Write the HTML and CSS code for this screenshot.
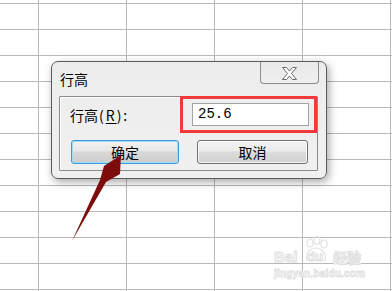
FILE: index.html
```html
<!DOCTYPE html>
<html lang="zh-CN">
<head>
    <meta charset="UTF-8">
    <title>行高</title>
    <link rel="stylesheet" href="styles.css">
</head>
<body>
    <div class="sheet">
        <!-- 行高对话框 -->
        <div class="dialog">
            <div class="titlebar">
                <div class="title">行高</div>
                <div class="close-btn">
                    <svg width="17" height="15" viewBox="0 0 17 15">
                        <path d="M1.5 1.5 H5.5 L8.5 5 L11.5 1.5 H15.5 L10.5 7.5 L15.5 13.5 H11.5 L8.5 10 L5.5 13.5 H1.5 L6.5 7.5 Z" fill="#fff" stroke="#6a6a6a" stroke-width="1" stroke-linejoin="round"/>
                    </svg>
                </div>
            </div>
            <div class="panel">
                <div class="label">行高<span class="key">(<u>R</u>):</span></div>
                <div class="mark">
                    <div class="input">25.6</div>
                </div>
                <div class="btn-cell"><button class="btn btn-ok">确定</button></div>
                <div class="btn-cell"><button class="btn btn-cancel">取消</button></div>
            </div>
        </div>

        <!-- 箭头标注 -->
        <svg class="arrow" width="392" height="291" viewBox="0 0 392 291">
            <polygon points="72,241 100,180 104,166 121,155 120,174 106,182" fill="#7d0c0c"/>
        </svg>

        <!-- 水印 -->
        <div class="watermark">
            <div class="wm-top">
                <span class="wm-bai">Bai</span>
                <span class="wm-du">
                    <svg width="26" height="26" viewBox="0 0 26 26">
                        <g fill="none" stroke="#e2e2e2" stroke-width="1.2">
                            <ellipse cx="7" cy="7" rx="3" ry="4"/>
                            <ellipse cx="14" cy="4.5" rx="3" ry="4"/>
                            <ellipse cx="21" cy="8" rx="3" ry="4"/>
                            <path d="M4 24 C2 17 8 12 13 12 C18 12 24 17 22 24 Z"/>
                        </g>
                    </svg>
                    <span class="wm-du-text">du</span>
                </span>
                <span class="wm-cn">经验</span>
            </div>
            <div class="wm-url">jingyan.baidu.com</div>
        </div>
    </div>
</body>
</html>
```

FILE: styles.css
```css
/* 基础样式 */
* {
    box-sizing: border-box;
    margin: 0;
    padding: 0;
}

body {
    font-family: 'Noto Sans CJK SC', 'Liberation Sans', sans-serif;
    background-color: #fff;
}

.sheet {
    position: relative;
    width: 392px;
    height: 291px;
    overflow: hidden;
    background-color: #fff;
    background-image:
        linear-gradient(to right, #b8b8b8 1px, transparent 1px),
        linear-gradient(to bottom, #b8b8b8 1px, transparent 1px);
    background-size: 88px 26px;
    background-position: 38px 3px;
}

/* 对话框 */
.dialog {
    position: absolute;
    left: 51px;
    top: 61px;
    width: 276px;
    height: 118px;
    border: 1px solid #5c5c5c;
    border-radius: 7px;
    background: linear-gradient(to bottom, #ededed, #f0f0f0);
    box-shadow: 2px 3px 8px rgba(0,0,0,0.35);
    display: flex;
    flex-direction: column;
}
.titlebar {
    height: 34px;
    display: flex;
    justify-content: space-between;
    align-items: flex-start;
}
.title {
    font-size: 14px;
    line-height: 20px;
    color: #000;
    margin: 7px 0 0 8px;
}
.close-btn {
    width: 59px;
    height: 22px;
    margin-right: 7px;
    border: 1px solid #8e8e8e;
    border-top: none;
    border-radius: 0 0 4px 4px;
    background: linear-gradient(to bottom, #e9e9e9, #efefef);
    display: flex;
    align-items: center;
    justify-content: center;
    padding-top: 1px;
}

.panel {
    margin: 0 8px 7px 7px;
    height: 75px;
    border: 1px solid #8a8a8a;
    box-shadow: inset 1px 1px 0 #fff;
    border-radius: 1px;
    display: grid;
    grid-template-columns: 120px 137px;
    grid-template-rows: 37px 24px;
    row-gap: 5px;
    align-items: center;
}
.label {
    font-size: 14px;
    color: #000;
    padding-left: 10px;
    margin-top: -1px;
}
.label .key {
    letter-spacing: 2px;
    margin-left: 1px;
}
.label u {
    text-underline-offset: 2px;
}
.mark {
    margin-top: -2px;
    height: 37px;
    border: 3px solid #f23a3a;
    padding: 4px 5px 4px 9px;
}
.input {
    height: 23px;
    border: 1px solid #a3a3a3;
    background-color: #fff;
    font-family: 'Liberation Mono', monospace;
    font-size: 14px;
    line-height: 21px;
    padding-left: 5px;
    color: #000;
}

.btn-cell {
    height: 24px;
}
.btn {
    height: 24px;
    font-family: 'Noto Sans CJK SC', sans-serif;
    font-size: 14px;
    line-height: 20px;
    color: #000;
    border-radius: 3px;
    background: linear-gradient(to bottom, #f3f3f3 0%, #ebebeb 45%, #dcdcdc 50%, #d0d0d0 100%);
    box-shadow: inset 0 0 0 1px rgba(255,255,255,0.8);
}
.btn-ok {
    width: 108px;
    margin-left: 11px;
    border: 1px solid #3c9ad6;
    background: linear-gradient(to bottom, #f2f2f2 0%, #e8e8e8 45%, #d8d8d8 50%, #cdcdcd 100%);
    box-shadow: inset 0 0 0 1px #9fdcf6;
}
.btn-cancel {
    width: 111px;
    margin-left: 17px;
    border: 1px solid #707070;
}

/* 箭头 */
.arrow {
    position: absolute;
    left: 0;
    top: 0;
}

/* 水印 */
.watermark {
    position: absolute;
    left: 274px;
    top: 236px;
    width: 92px;
    color: #fff;
    font-family: 'Liberation Sans', sans-serif;
}
.wm-top {
    display: flex;
    align-items: flex-end;
    height: 28px;
}
.wm-bai {
    font-size: 15px;
    font-weight: bold;
    line-height: 14px;
    -webkit-text-stroke: 1px #e0e0e0;
    width: 29px;
}
.wm-du {
    position: relative;
    width: 27px;
    height: 28px;
}
.wm-du-text {
    position: absolute;
    left: 4px;
    bottom: 0;
    font-size: 13px;
    font-weight: bold;
    line-height: 14px;
    -webkit-text-stroke: 1px #e0e0e0;
}
.wm-cn {
    font-family: 'Noto Sans CJK SC', sans-serif;
    font-size: 14px;
    line-height: 14px;
    font-weight: bold;
    -webkit-text-stroke: 1px #e0e0e0;
    margin-left: 3px;
}
.wm-url {
    margin-top: 5px;
    font-size: 10px;
    font-weight: bold;
    -webkit-text-stroke: 0.8px #e0e0e0;
    letter-spacing: 0.2px;
    line-height: 10px;
}
```
